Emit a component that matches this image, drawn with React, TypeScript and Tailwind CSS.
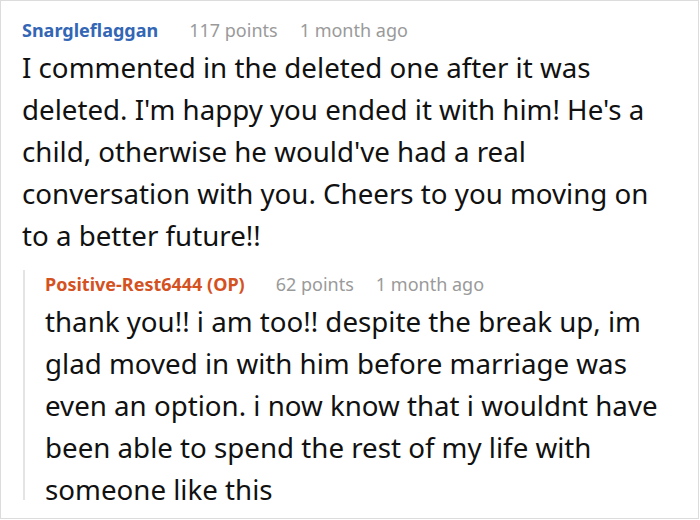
import React from "react";

const font = { fontFamily: '"Noto Sans", "Open Sans", sans-serif' };

const CommentHeader = ({ author, points, age, isOp }: any) => (
  <div className="flex items-center h-[28px] text-[18px] leading-[28px]">
    <span className={`font-bold ${isOp ? "text-[#d4521f]" : "text-[#3366b5]"}`}>{author}</span>
    <span className="ml-[31px] text-[#9a9a9a]">{points} points</span>
    <span className="ml-[22px] text-[#9a9a9a]">{age}</span>
  </div>
);

const Body = ({ lines }: { lines: string[] }) => (
  <p className="mt-[2px] text-[27.7px] leading-[42px] text-[#111] whitespace-nowrap">
    {lines.map((l, i) => (
      <React.Fragment key={i}>
        {l}
        {i < lines.length - 1 && <br />}
      </React.Fragment>
    ))}
  </p>
);

export default function App() {
  return (
    <div className="w-[700px] h-[520px] bg-white overflow-hidden" style={font}>
      <div className="w-[699px] h-[519px] border border-[#dcdcdc] pl-[21px] pt-[15px] pr-3">
        <CommentHeader author="Snargleflaggan" points={117} age="1 month ago" />
        <Body
          lines={[
            "I commented in the deleted one after it was",
            "deleted. I'm happy you ended it with him! He's a",
            "child, otherwise he would've had a real",
            "conversation with you. Cheers to you moving on",
            "to a better future!!",
          ]}
        />

        <div className="mt-[14px] ml-[1px] h-[230px] border-l-2 border-[#e4e4e4] pl-[20px]">
          <CommentHeader author="Positive-Rest6444 (OP)" points={62} age="1 month ago" isOp />
          <Body
            lines={[
              "thank you!! i am too!! despite the break up, im",
              "glad moved in with him before marriage was",
              "even an option. i now know that i wouldnt have",
              "been able to spend the rest of my life with",
              "someone like this",
            ]}
          />
        </div>
      </div>
    </div>
  );
}
